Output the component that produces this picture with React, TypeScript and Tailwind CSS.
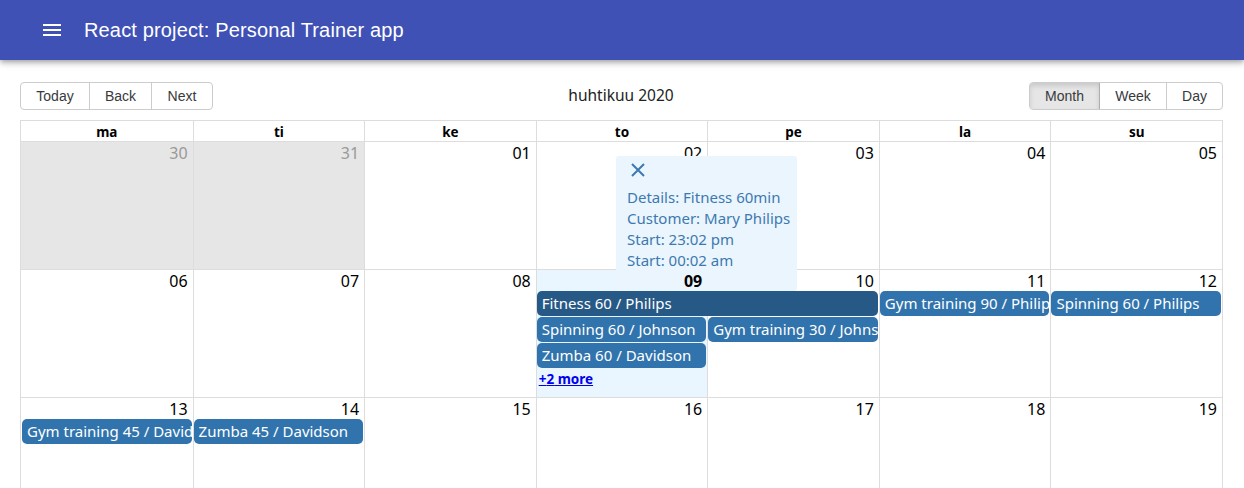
type Ev = { title: string; col: number; row: number; span?: number; selected?: boolean };
type Week = {
  days: string[];
  off?: number[];
  today?: number;
  events: Ev[];
  more?: { col: number; count: number };
};

const colStart = ["", "col-start-1", "col-start-2", "col-start-3", "col-start-4", "col-start-5", "col-start-6", "col-start-7"];
const rowStart = ["", "row-start-1", "row-start-2", "row-start-3", "row-start-4", "row-start-5"];
const colSpan = ["", "col-span-1", "col-span-2", "col-span-3"];

const headers = ["ma", "ti", "ke", "to", "pe", "la", "su"];

const weeks: Week[] = [
  { days: ["30", "31", "01", "02", "03", "04", "05"], off: [1, 2], events: [] },
  {
    days: ["06", "07", "08", "09", "10", "11", "12"],
    today: 4,
    events: [
      { title: "Fitness 60 / Philips", col: 4, row: 2, span: 2, selected: true },
      { title: "Gym training 90 / Philips", col: 6, row: 2 },
      { title: "Spinning 60 / Philips", col: 7, row: 2 },
      { title: "Spinning 60 / Johnson", col: 4, row: 3 },
      { title: "Gym training 30 / Johnson", col: 5, row: 3 },
      { title: "Zumba 60 / Davidson", col: 4, row: 4 },
    ],
    more: { col: 4, count: 2 },
  },
  {
    days: ["13", "14", "15", "16", "17", "18", "19"],
    events: [
      { title: "Gym training 45 / Davidson", col: 1, row: 2 },
      { title: "Zumba 45 / Davidson", col: 2, row: 2 },
    ],
  },
  { days: ["20", "21", "22", "23", "24", "25", "26"], events: [] },
  { days: ["27", "28", "29", "30", "01", "02", "03"], off: [5, 6, 7], events: [] },
];

function WeekRow({ week, index }: { week: Week; index: number }) {
  // the second week sits above the open popup
  const lifted = index === 1 ? "relative z-20" : "";
  return (
    <div
      className={`grid grid-cols-7 grid-rows-[21px_26px_26px_26px_1fr] ${
        index === 0 ? "h-[127px]" : "h-[128px] border-t border-[#ddd]"
      }`}
    >
      {week.days.map((d, i) => {
        const c = i + 1;
        const off = week.off?.includes(c);
        const today = week.today === c;
        return (
          <div
            key={"bg" + i}
            className={`${colStart[c]} row-span-full ${i > 0 ? "border-l border-[#ddd]" : ""} ${
              off ? "bg-[#e6e6e6]" : today ? "bg-[#eaf6ff]" : "bg-white"
            }`}
          />
        );
      })}
      {week.days.map((d, i) => {
        const c = i + 1;
        const off = week.off?.includes(c);
        const today = week.today === c;
        return (
          <div
            key={"d" + i}
            className={`${colStart[c]} row-start-1 text-right pr-[5px] pt-px text-[16px] leading-[20px] ${
              off ? "text-[#999]" : "text-black"
            } ${today ? "font-bold" : ""} ${lifted}`}
          >
            {d}
          </div>
        );
      })}
      {week.events.map((e) => (
        <div
          key={e.title + e.col}
          className={`${colStart[e.col]} ${colSpan[e.span ?? 1]} ${rowStart[e.row]} px-px pb-px min-w-0 ${lifted}`}
        >
          <div
            className={`${
              e.selected ? "bg-[#265985]" : "bg-[#3174ad]"
            } text-white rounded-[5px] px-[5px] py-[2px] text-[15px] leading-[21px] whitespace-nowrap overflow-hidden`}
          >
            {e.title}
          </div>
        </div>
      ))}
      {week.more && (
        <div className={`${colStart[week.more.col]} row-start-5 pl-[3px] pt-[2px] leading-[15px] ${lifted}`}>
          <a href="#" className="text-[#0000ee] underline font-bold text-[13.5px] leading-[15px]">
            +{week.more.count} more
          </a>
        </div>
      )}
    </div>
  );
}

function Popup() {
  return (
    <div className="absolute left-[595px] top-[35px] w-[181px] h-[135px] z-10 bg-[#eaf5fd] rounded-[3px] pl-[11px] pt-[7px] text-[#3d79b1] text-[15px] leading-[21px]">
      <svg width="14" height="14" viewBox="0 0 14 14" className="ml-[4px]">
        <path d="M1 1 13 13M13 1 1 13" stroke="#3d79b1" strokeWidth="2" fill="none" />
      </svg>
      <div className="mt-[10px]">
        <div>Details: Fitness 60min</div>
        <div>Customer: Mary Philips</div>
        <div>Start: 23:02 pm</div>
        <div>Start: 00:02 am</div>
      </div>
    </div>
  );
}

export default function App() {
  const btn = "h-full flex items-center justify-center text-[14px] text-[#373a3c]";
  return (
    <div className="min-h-screen bg-white" style={{ fontFamily: '"Noto Sans", sans-serif' }}>
      <header className="relative z-30 h-[60px] bg-[#3f51b5] text-white flex items-center shadow-[0_2px_4px_-1px_rgba(0,0,0,0.2),0_4px_5px_0_rgba(0,0,0,0.14),0_1px_10px_0_rgba(0,0,0,0.12)]">
        <div className="ml-[40px] w-[24px] h-[24px] flex items-center justify-center">
          <svg width="24" height="24" viewBox="0 0 24 24" fill="white">
            <path d="M3 18h18v-2H3v2zm0-5h18v-2H3v2zm0-7v2h18V6H3z" />
          </svg>
        </div>
        <h1
          className="ml-[20px] text-[20px] leading-[32px] font-normal tracking-[0.15px]"
          style={{ fontFamily: '"Liberation Sans", Arial, sans-serif' }}
        >
          React project: Personal Trainer app
        </h1>
      </header>

      <main className="pl-5 pr-[21px] pt-[22px]">
        <div className="flex items-center h-[28px] mb-[10px]">
          <div
            className="flex h-full border border-[#ccc] rounded-[4px] overflow-hidden"
            style={{ fontFamily: '"Liberation Sans", Arial, sans-serif' }}
          >
            <button className={`${btn} w-[68px]`}>Today</button>
            <button className={`${btn} w-[62px] border-l border-[#ccc]`}>Back</button>
            <button className={`${btn} w-[61px] border-l border-[#ccc]`}>Next</button>
          </div>
          <div className="flex-1 text-center text-[15.5px] text-[#222]">huhtikuu 2020</div>
          <div
            className="flex h-full border border-[#ccc] rounded-[4px] overflow-hidden"
            style={{ fontFamily: '"Liberation Sans", Arial, sans-serif' }}
          >
            <button className={`${btn} w-[70px] bg-[#e6e6e6] border-r border-[#adadad] shadow-[inset_0_3px_5px_rgba(0,0,0,0.125)]`}>
              Month
            </button>
            <button className={`${btn} w-[66px]`}>Week</button>
            <button className={`${btn} w-[56px] border-l border-[#ccc]`}>Day</button>
          </div>
        </div>

        <div className="relative border border-[#ddd]">
          <div className="grid grid-cols-7 border-b border-[#ddd] h-[21px]">
            {headers.map((h, i) => (
              <div
                key={h}
                className={`text-center font-bold text-[13.5px] leading-[20px] pt-px text-black ${
                  i > 0 ? "border-l border-[#ddd]" : ""
                }`}
              >
                {h}
              </div>
            ))}
          </div>
          {weeks.map((w, i) => (
            <WeekRow key={i} week={w} index={i} />
          ))}
          <Popup />
        </div>
      </main>
    </div>
  );
}
